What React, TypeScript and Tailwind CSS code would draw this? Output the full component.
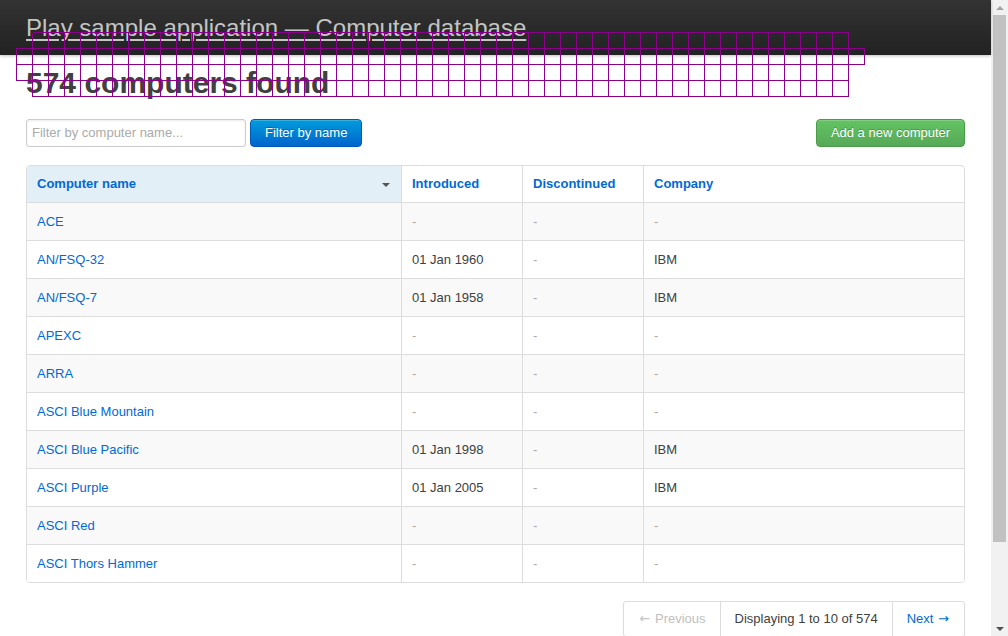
import React from "react";

const rows: { name: string; intro: string; disc: string; company: string }[] = [
  { name: "ACE", intro: "-", disc: "-", company: "-" },
  { name: "AN/FSQ-32", intro: "01 Jan 1960", disc: "-", company: "IBM" },
  { name: "AN/FSQ-7", intro: "01 Jan 1958", disc: "-", company: "IBM" },
  { name: "APEXC", intro: "-", disc: "-", company: "-" },
  { name: "ARRA", intro: "-", disc: "-", company: "-" },
  { name: "ASCI Blue Mountain", intro: "-", disc: "-", company: "-" },
  { name: "ASCI Blue Pacific", intro: "01 Jan 1998", disc: "-", company: "IBM" },
  { name: "ASCI Purple", intro: "01 Jan 2005", disc: "-", company: "IBM" },
  { name: "ASCI Red", intro: "-", disc: "-", company: "-" },
  { name: "ASCI Thors Hammer", intro: "-", disc: "-", company: "-" },
];

function Cell({ v, first }: { v: string; first?: boolean }) {
  return (
    <div
      className={
        (first ? "" : "border-l border-[#dddddd] ") +
        "px-[10px] leading-[37px] h-[37px] whitespace-nowrap " +
        (v === "-" ? "text-[#aaaaaa]" : "text-[#404040]")
      }
    >
      {v}
    </div>
  );
}

function GridOverlay() {
  const vs: number[] = [];
  for (let x = 32; x <= 848; x += 16) vs.push(x);
  const hs = [32, 48, 64, 80, 96];
  return (
    <svg
      className="absolute left-0 top-0 z-20 pointer-events-none"
      width={991}
      height={100}
      shapeRendering="crispEdges"
    >
      <g stroke="#8b008b" strokeWidth={1} fill="none">
        {vs.map((x) => (
          <line key={"v" + x} x1={x + 0.5} y1={32.5} x2={x + 0.5} y2={96.5} />
        ))}
        {hs.map((y) => (
          <line key={"h" + y} x1={32.5} y1={y + 0.5} x2={848.5} y2={y + 0.5} />
        ))}
        <rect x={16.5} y={48.5} width={848} height={16} />
        <rect x={16.5} y={48.5} width={16} height={32} />
      </g>
    </svg>
  );
}

export default function App() {
  return (
    <div
      className="flex w-[1008px] h-[636px] overflow-hidden bg-white text-[13px] text-[#404040]"
      style={{ fontFamily: '"Liberation Sans", Arial, sans-serif' }}
    >
      <div className="relative flex-1 min-w-0">
        <header className="h-[55px] bg-gradient-to-b from-[#333333] to-[#222222] shadow-[0_1px_3px_rgba(0,0,0,0.25)] relative z-10">
          <h1 className="ml-[26px] text-[24px] leading-[55px] font-normal text-[#c4c4c4] underline decoration-[1.5px] underline-offset-[3px] whitespace-nowrap">
            Play sample application — Computer database
          </h1>
        </header>

        <div className="ml-[26px] w-[939px]">
          <h2 className="mt-[10px] text-[30px] leading-[36px] font-bold text-[#404040] whitespace-nowrap">
            574 computers found
          </h2>

          <div className="mt-[18px] flex items-center justify-between h-[28px]">
            <div className="flex items-center">
              <div className="w-[220px] h-[28px] border border-[#cccccc] rounded-[3px] px-[5px] leading-[26px] text-[13px] text-[#aaaaaa] shadow-[inset_0_1px_2px_rgba(0,0,0,0.08)]">
                Filter by computer name...
              </div>
              <button className="ml-[4px] h-[28px] px-[14px] rounded-[4px] border border-[#0058b8] bg-gradient-to-b from-[#049cdb] to-[#0064cd] text-white text-[13px] leading-[26px] [text-shadow:0_-1px_0_rgba(0,0,0,0.25)] shadow-[inset_0_1px_0_rgba(255,255,255,0.2)]">
                Filter by name
              </button>
            </div>
            <button className="h-[28px] w-[149px] rounded-[4px] border border-[#4a9a4a] bg-gradient-to-b from-[#62c462] to-[#57a957] text-white text-[13px] leading-[26px] [text-shadow:0_-1px_0_rgba(0,0,0,0.25)] shadow-[inset_0_1px_0_rgba(255,255,255,0.2)]">
              Add a new computer
            </button>
          </div>

          <div className="mt-[18px] border border-[#dddddd] rounded-[4px] overflow-hidden">
            <div className="grid grid-cols-[374px_121px_121px_1fr] font-bold text-[#0069d6]">
              <div className="relative px-[10px] h-[36px] leading-[36px] bg-[#e2eff6]">
                Computer name
                <span className="absolute right-[11px] top-[17px] w-0 h-0 border-l-[4px] border-r-[4px] border-t-[4px] border-l-transparent border-r-transparent border-t-[#555555]" />
              </div>
              <div className="border-l border-[#dddddd] px-[10px] h-[36px] leading-[36px]">Introduced</div>
              <div className="border-l border-[#dddddd] px-[10px] h-[36px] leading-[36px]">Discontinued</div>
              <div className="border-l border-[#dddddd] px-[10px] h-[36px] leading-[36px]">Company</div>
            </div>
            {rows.map((r, i) => (
              <div
                key={r.name}
                className={
                  "grid grid-cols-[374px_121px_121px_1fr] border-t border-[#dddddd] " +
                  (i % 2 === 0 ? "bg-[#f9f9f9]" : "bg-white")
                }
              >
                <div className="px-[10px] leading-[37px] h-[37px] text-[#0069d6] whitespace-nowrap">{r.name}</div>
                <Cell v={r.intro} />
                <Cell v={r.disc} />
                <Cell v={r.company} />
              </div>
            ))}
          </div>

          <div className="mt-[18px] flex justify-end">
            <div className="flex h-[36px] border border-[#dddddd] rounded-[3px] shadow-[0_1px_2px_rgba(0,0,0,0.05)]">
              <div className="px-[14px] leading-[34px] text-[#bfbfbf] whitespace-nowrap">
                <span className="inline-block w-[13px] text-center font-['DejaVu_Sans'] text-[13px]">←</span> Previous
              </div>
              <div className="px-[14px] leading-[34px] border-l border-[#dddddd] text-[#404040] whitespace-nowrap">
                Displaying 1 to 10 of 574
              </div>
              <div className="px-[14px] leading-[34px] border-l border-[#dddddd] text-[#0069d6] whitespace-nowrap">
                Next <span className="inline-block w-[13px] text-center font-['DejaVu_Sans'] text-[13px]">→</span>
              </div>
            </div>
          </div>
        </div>

        <GridOverlay />
      </div>

      <div className="w-[17px] h-full bg-[#f1f1f1] flex flex-col items-center">
        <div className="h-[15px] w-full flex items-center justify-center">
          <span className="w-0 h-0 border-l-[4px] border-r-[4px] border-b-[4px] border-l-transparent border-r-transparent border-b-[#a3a3a3]" />
        </div>
        <div className="w-[13px] h-[527px] bg-[#c1c1c1]" />
        <div className="flex-1" />
        <div className="h-[15px] w-full flex items-center justify-center">
          <span className="w-0 h-0 border-l-[4px] border-r-[4px] border-t-[4px] border-l-transparent border-r-transparent border-t-[#505050]" />
        </div>
      </div>
    </div>
  );
}
